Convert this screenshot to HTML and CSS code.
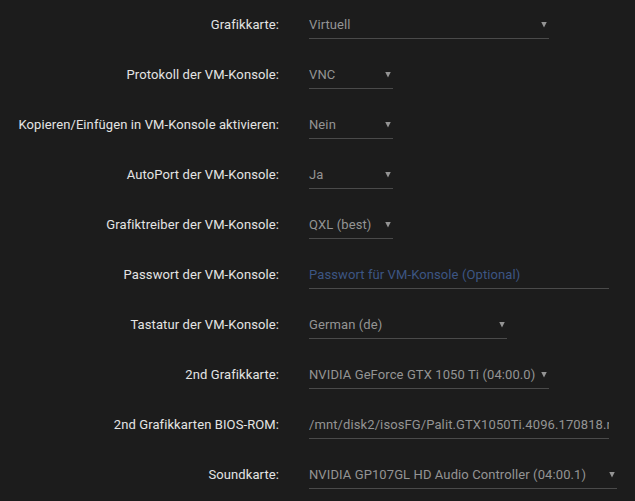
FILE: index.html
```html
<html>
	<head>
		<meta charset="utf-8">
		<title>VM Einstellungen</title>
		<link rel="stylesheet" href="styles.css">
	</head>
	<body>
		<div class="vm-form">
			<div class="form-row">
				<label class="form-label">Grafikkarte:</label>
				<div class="field select w240"><span class="field-text">Virtuell</span><span class="arrow"></span></div>
			</div>
			<div class="form-row">
				<label class="form-label">Protokoll der VM-Konsole:</label>
				<div class="field select w84"><span class="field-text">VNC</span><span class="arrow"></span></div>
			</div>
			<div class="form-row">
				<label class="form-label">Kopieren/Einfügen in VM-Konsole aktivieren:</label>
				<div class="field select w84"><span class="field-text">Nein</span><span class="arrow"></span></div>
			</div>
			<div class="form-row">
				<label class="form-label">AutoPort der VM-Konsole:</label>
				<div class="field select w84"><span class="field-text">Ja</span><span class="arrow"></span></div>
			</div>
			<div class="form-row">
				<label class="form-label">Grafiktreiber der VM-Konsole:</label>
				<div class="field select w84"><span class="field-text">QXL (best)</span><span class="arrow"></span></div>
			</div>
			<div class="form-row">
				<label class="form-label">Passwort der VM-Konsole:</label>
				<div class="field w300"><span class="field-text placeholder">Passwort für VM-Konsole (Optional)</span></div>
			</div>
			<div class="form-row">
				<label class="form-label">Tastatur der VM-Konsole:</label>
				<div class="field select w198"><span class="field-text">German (de)</span><span class="arrow"></span></div>
			</div>
			<div class="form-row">
				<label class="form-label">2nd Grafikkarte:</label>
				<div class="field select w240"><span class="field-text">NVIDIA GeForce GTX 1050 Ti (04:00.0)</span><span class="arrow"></span></div>
			</div>
			<div class="form-row">
				<label class="form-label">2nd Grafikkarten BIOS-ROM:</label>
				<div class="field w300"><span class="field-text">/mnt/disk2/isosFG/Palit.GTX1050Ti.4096.170818.rom</span></div>
			</div>
			<div class="form-row">
				<label class="form-label">Soundkarte:</label>
				<div class="field select w308"><span class="field-text">NVIDIA GP107GL HD Audio Controller (04:00.1)</span><span class="arrow"></span></div>
			</div>
		</div>
	</body>
</html>
```

FILE: styles.css
```css
body {
	margin: 0;
	background-color: #1c1c1c;
	font-family: Roboto, "Liberation Sans", sans-serif;
	font-size: 13px;
	letter-spacing: 0.1px;
}

.vm-form {
	display: flex;
	flex-direction: column;
}

.form-row {
	display: grid;
	grid-template-columns: 279px auto;
	column-gap: 30px;
	height: 50px;
	padding-top: 16px;
	box-sizing: border-box;
	align-items: start;
}

.form-label {
	text-align: right;
	color: #e4e4e4;
	line-height: 17px;
	white-space: nowrap;
}

.field {
	display: flex;
	align-items: center;
	line-height: 17px;
	padding-bottom: 5px;
	border-bottom: 1px solid #4a4a4a;
	color: #949494;
	overflow: hidden;
	white-space: nowrap;
}

.field-text {
	flex: 1;
	overflow: hidden;
}

.placeholder {
	color: #3c5684;
}

.arrow {
	width: 6px;
	height: 6px;
	margin-left: 4px;
	margin-right: 2px;
	background-color: #949494;
	clip-path: polygon(0 0, 100% 0, 50% 100%);
}

.w84 { width: 84px; }
.w198 { width: 198px; }
.w240 { width: 240px; }
.w300 { width: 300px; }
.w308 { width: 308px; }
```
